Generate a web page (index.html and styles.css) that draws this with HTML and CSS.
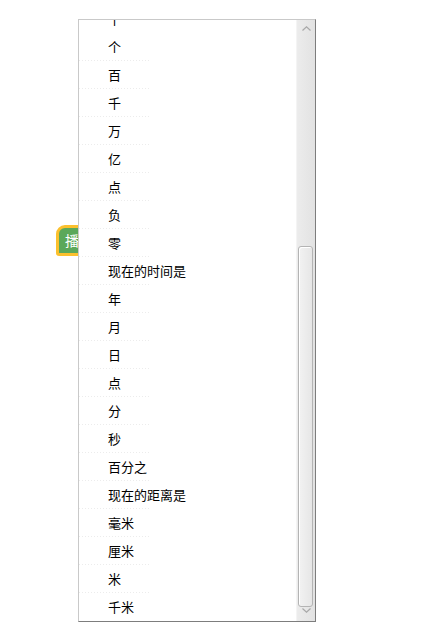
FILE: index.html
```html
<!DOCTYPE html>
<html lang="zh-CN">
<head>
    <meta charset="UTF-8">
    <meta name="viewport" content="width=device-width, initial-scale=1.0">
    <title>下拉菜单</title>
    <link rel="stylesheet" href="styles.css">
</head>
<body>
    <div class="workspace">
        <div class="bubble">播报</div>

        <!-- dropdown menu opened over the block -->
        <div class="dropdown">
            <div class="viewport">
                <ul class="options">
                    <li>十</li>
                    <li>个</li>
                    <li>百</li>
                    <li>千</li>
                    <li>万</li>
                    <li>亿</li>
                    <li>点</li>
                    <li>负</li>
                    <li>零</li>
                    <li>现在的时间是</li>
                    <li>年</li>
                    <li>月</li>
                    <li>日</li>
                    <li>点</li>
                    <li>分</li>
                    <li>秒</li>
                    <li>百分之</li>
                    <li>现在的距离是</li>
                    <li>毫米</li>
                    <li>厘米</li>
                    <li>米</li>
                    <li>千米</li>
                </ul>
            </div>
            <div class="scrollbar">
                <div class="arrow up">
                    <svg width="9" height="5" viewBox="0 0 9 5"><path d="M0.5 4.5 L4.5 0.8 L8.5 4.5" fill="none" stroke="#a8a8a8" stroke-width="1.2"/></svg>
                </div>
                <div class="track">
                    <div class="thumb"></div>
                </div>
                <div class="arrow down">
                    <svg width="9" height="5" viewBox="0 0 9 5"><path d="M0.5 0.5 L4.5 4.2 L8.5 0.5" fill="none" stroke="#a8a8a8" stroke-width="1.2"/></svg>
                </div>
            </div>
        </div>
    </div>
</body>
</html>
```

FILE: styles.css
```css
body {
    margin: 0;
    background: #fff;
    font-family: "Noto Sans CJK SC", "Noto Sans", sans-serif;
}
.workspace {
    position: relative;
    width: 424px;
    height: 642px;
}
.bubble {
    position: absolute;
    left: 56px;
    top: 225px;
    height: 25px;
    padding: 0 8px 0 6px;
    background: #5ba85a;
    border: 3px solid #fbc02d;
    border-radius: 9px 9px 9px 3px;
    color: #fff;
    font-size: 14px;
    line-height: 25px;
    white-space: nowrap;
}
.dropdown {
    position: absolute;
    left: 78px;
    top: 19px;
    width: 236px;
    height: 601px;
    display: flex;
    background: #fff;
    border: 1px solid #c9c9c9;
    border-right-color: #7d7d7d;
    border-bottom-color: #7d7d7d;
}
.viewport {
    flex: 1;
    overflow: hidden;
}
.options {
    list-style: none;
    margin: -16px 0 0;
    padding: 0;
}
.options li {
    box-sizing: border-box;
    width: 70px;
    height: 28px;
    line-height: 27px;
    padding: 1px 0 0 29px;
    font-size: 13px;
    color: #000;
    white-space: nowrap;
    /* faint dotted separator between rows */
    background-image: linear-gradient(to right, #ececec 50%, transparent 50%);
    background-size: 3px 1px;
    background-repeat: repeat-x;
    background-position: 0 0;
}
.options li:first-child,
.options li:nth-child(2) {
    background-image: none;
}
.scrollbar {
    width: 18px;
    display: flex;
    flex-direction: column;
    background: linear-gradient(to right, #ececec, #e2e2e2);
    border-left: 1px solid #f4f4f4;
}
.arrow {
    display: flex;
    justify-content: center;
}
.arrow.up {
    height: 17px;
    align-items: center;
}
.arrow.down {
    height: 14px;
    align-items: flex-start;
    padding-top: 1px;
    box-sizing: border-box;
}
.track {
    flex: 1;
    display: flex;
    flex-direction: column;
    justify-content: flex-end;
}
.thumb {
    height: 359px;
    margin: 0 2px 0 1px;
    background: linear-gradient(to right, #f2f2f2, #e6e6e6);
    border: 1px solid #b4b4b4;
    border-radius: 3px;
    box-shadow: inset 1px 1px 0 #fff;
}
```
